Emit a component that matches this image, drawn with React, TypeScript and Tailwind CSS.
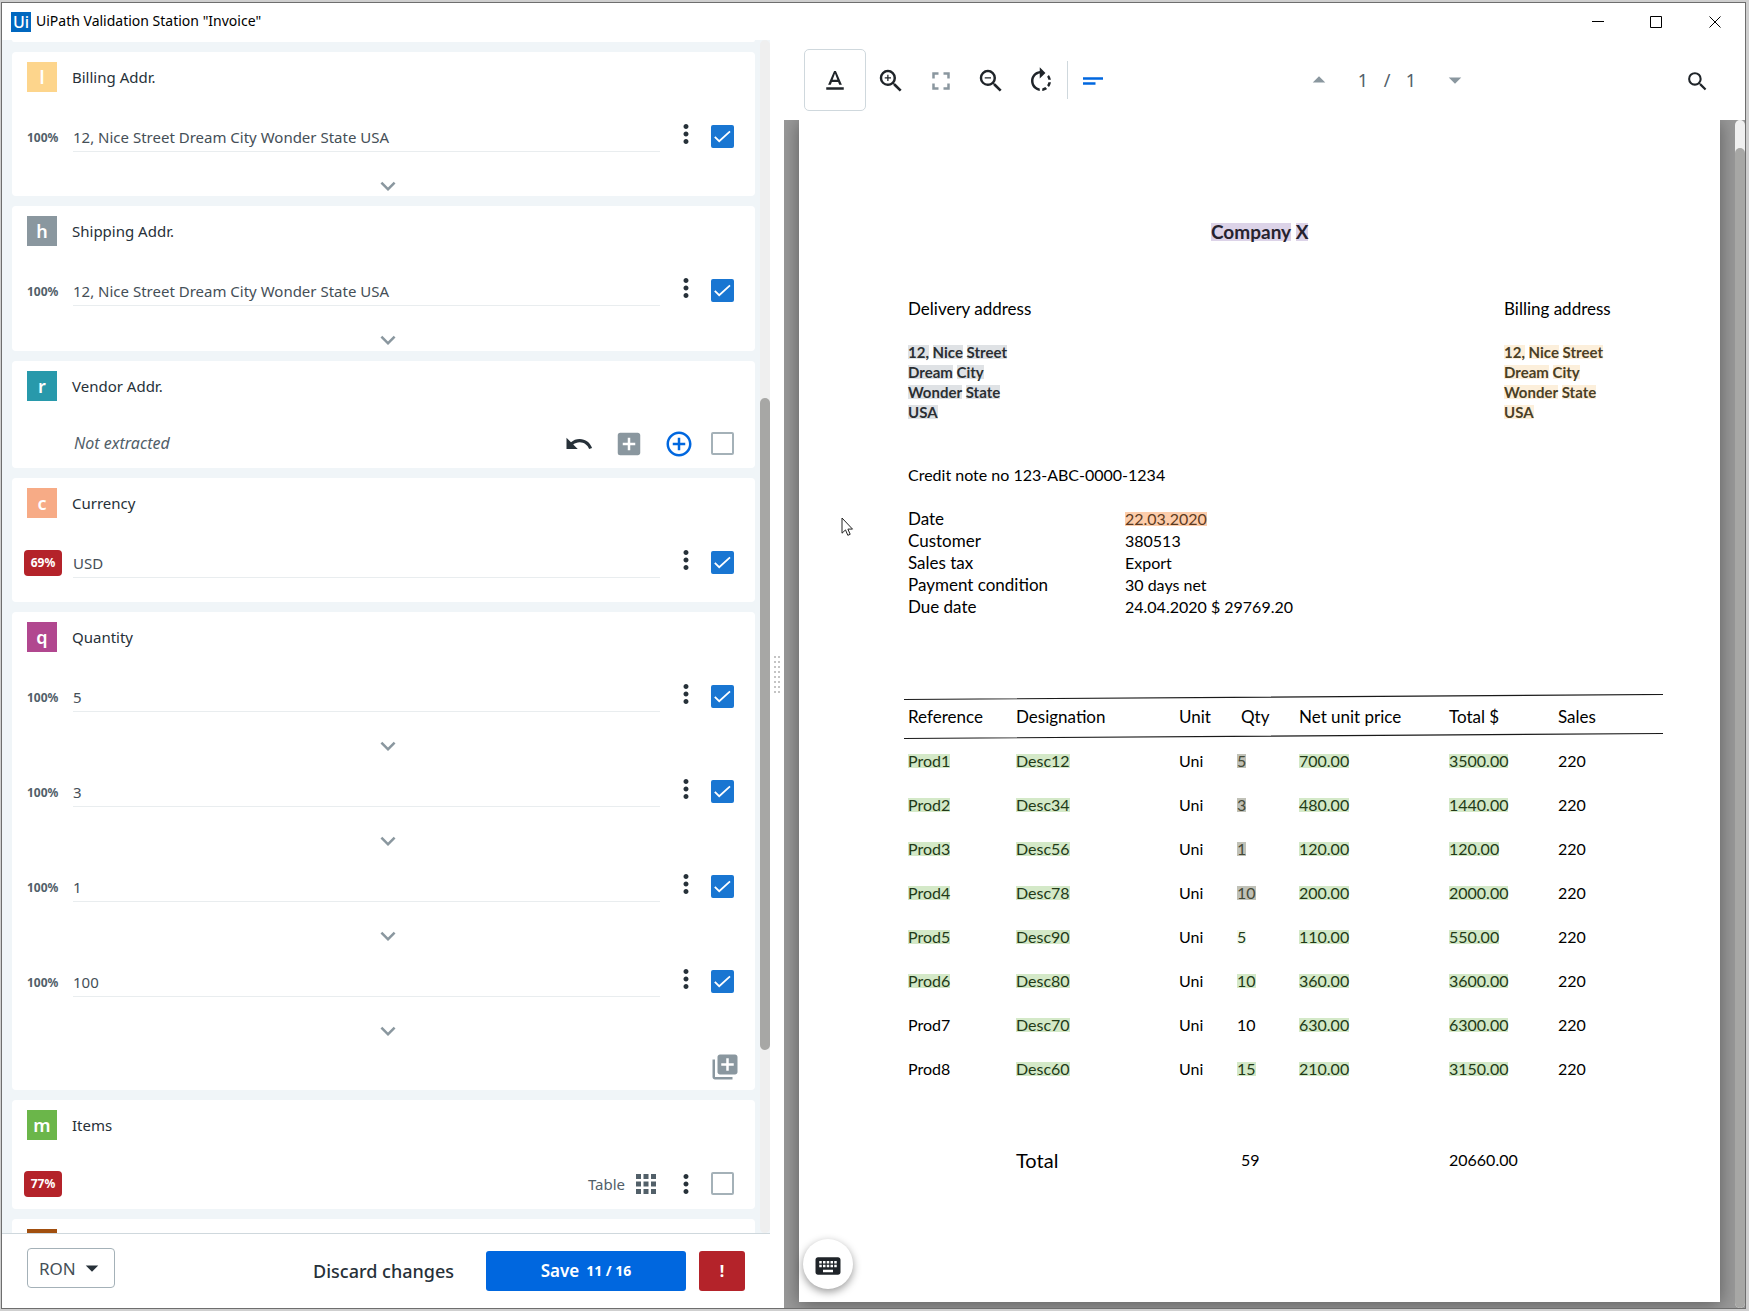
import type { ReactNode } from "react";
import {
  MdAddBox,
  MdApps,
  MdArrowDropDown,
  MdArrowDropUp,
  MdControlPoint,
  MdExpandMore,
  MdFullscreen,
  MdKeyboard,
  MdLibraryAdd,
  MdMoreVert,
  MdRotateRight,
  MdSearch,
  MdShortText,
  MdTextFormat,
  MdUndo,
  MdZoomIn,
  MdZoomOut,
} from "react-icons/md";

function TitleBar() {
  return (
    <header className="flex h-[37px] shrink-0 items-center justify-between pl-[9px] text-black">
      <div className="flex items-center gap-[5px]">
        <span className="flex size-5 items-center justify-center bg-[#0067bf] text-base font-medium leading-5 text-white">
          Ui
        </span>
        <h1 className="pb-px text-sm">UiPath Validation Station "Invoice"</h1>
      </div>
      <div className="flex">
        <button aria-label="Minimize" className="flex h-9 w-[58px] items-center justify-center">
          <svg width="12" height="12" viewBox="0 0 12 12">
            <path d="M0 5.5h12" stroke="#000" />
          </svg>
        </button>
        <button aria-label="Maximize" className="flex h-9 w-[58px] items-center justify-center">
          <svg width="12" height="12" viewBox="0 0 12 12">
            <path d="M.5.5h11v11H.5z" fill="none" stroke="#000" />
          </svg>
        </button>
        <button aria-label="Close" className="flex h-9 w-[60px] items-center justify-center">
          <svg width="12" height="12" viewBox="0 0 12 12">
            <path d="M.5.5l11 11M11.5.5l-11 11" stroke="#000" />
          </svg>
        </button>
      </div>
    </header>
  );
}

function Tick({ label, checked }: { label: string; checked?: boolean }) {
  return (
    <label className="mb-[2px] ml-[10px] grid size-[23px] shrink-0 place-items-center">
      <input
        type="checkbox"
        aria-label={label}
        defaultChecked={checked}
        className="peer col-start-1 row-start-1 size-[23px] appearance-none rounded-[2px] border-2 border-[#a4b1b8] bg-white checked:border-[#1976d2] checked:bg-[#1976d2]"
      />
      <svg
        width="17"
        height="13"
        viewBox="0 0 17 13"
        className="pointer-events-none invisible col-start-1 row-start-1 peer-checked:visible"
      >
        <path d="M.8 6.8l4.4 4.4L16 1.3" fill="none" stroke="#fff" strokeWidth="1.8" />
      </svg>
    </label>
  );
}

function Confidence({ value, low }: { value: string; low?: boolean }) {
  return low ? (
    <span className="-ml-[3px] mr-[11px] flex h-[26px] w-[38px] shrink-0 items-center justify-center rounded bg-[#b4232a] text-xs font-bold text-white">
      {value}
    </span>
  ) : (
    <span className="w-[46px] shrink-0 pt-[2px] text-xs font-bold text-[#526069]">{value}</span>
  );
}

function MoreButton() {
  return (
    <button aria-label="More options" className="shrink-0 pb-[6px] text-[#273139]">
      <MdMoreVert size={30} />
    </button>
  );
}

function FieldRow({
  name,
  value,
  confidence,
  low,
}: {
  name: string;
  value: string;
  confidence: string;
  low?: boolean;
}) {
  return (
    <div className="flex h-[30px] items-center">
      <Confidence value={confidence} low={low} />
      <input
        aria-label={name}
        defaultValue={value}
        className="mr-[11px] h-[30px] min-w-0 flex-1 border-b border-[#e9edef] bg-transparent text-[15px] text-[#454f57] outline-none"
      />
      <MoreButton />
      <Tick label={"Confirm " + name} checked />
    </div>
  );
}

function Expander() {
  return (
    <div className="mt-[19px] flex h-[30px] items-center justify-center pl-[15px] text-[#8a979f]">
      <button aria-label="Expand">
        <MdExpandMore size={30} />
      </button>
    </div>
  );
}

function Card({
  letter,
  color,
  title,
  className,
  children,
}: {
  letter: string;
  color: string;
  title: string;
  className: string;
  children: ReactNode;
}) {
  return (
    <section className={"shrink-0 rounded bg-white pl-[15px] pr-[21px] pt-[10px] " + className}>
      <div className="mb-[30px] flex items-center gap-[15px]">
        <span
          className={
            "flex size-[30px] items-center justify-center text-lg font-semibold leading-none text-white " + color
          }
        >
          {letter}
        </span>
        <h2 className="text-[15px] text-[#273139]">{title}</h2>
      </div>
      {children}
    </section>
  );
}

const address = "12, Nice Street Dream City Wonder State USA";

function FieldList() {
  return (
    <div className="flex min-h-0 flex-1 bg-[#f0f5f8]">
      <div className="flex min-w-0 flex-1 flex-col gap-[10px] overflow-hidden pl-[10px] pr-[5px]">
        <div className="h-[2px] shrink-0 rounded-b bg-white" />
        <Card letter="l" color="bg-[#fdd58c]" title="Billing Addr." className="h-[144px]">
          <FieldRow name="Billing Addr." value={address} confidence="100%" />
          <Expander />
        </Card>
        <Card letter="h" color="bg-[#8a979f]" title="Shipping Addr." className="h-[145px]">
          <FieldRow name="Shipping Addr." value={address} confidence="100%" />
          <Expander />
        </Card>
        <Card letter="r" color="bg-[#2899ab]" title="Vendor Addr." className="h-[107px]">
          <div className="-mt-[2px] flex h-[30px] items-center">
            <em className="ml-[47px] flex-1 pb-[2px] text-base text-[#526069]">Not extracted</em>
            <button aria-label="Undo" className="text-[#273139]">
              <MdUndo size={30} />
            </button>
            <button aria-label="Add value" className="ml-5 text-[#8a979f]">
              <MdAddBox size={30} />
            </button>
            <button aria-label="Add from document" className="ml-5 mr-[7px] text-[#0067df]">
              <MdControlPoint size={30} />
            </button>
            <Tick label="Confirm Vendor Addr." />
          </div>
        </Card>
        <Card letter="c" color="bg-[#f7ab86]" title="Currency" className="h-[124px]">
          <FieldRow name="Currency" value="USD" confidence="69%" low />
        </Card>
        <Card letter="q" color="bg-[#b1478f]" title="Quantity" className="h-[478px]">
          <div className="flex flex-col gap-4">
            {["5", "3", "1", "100"].map((v, i) => (
              <div key={i}>
                <FieldRow name={"Quantity " + (i + 1)} value={v} confidence="100%" />
                <Expander />
              </div>
            ))}
          </div>
          <div className="mt-[6px] flex justify-end text-[#8a979f]">
            <button aria-label="Add quantity" className="-mr-[6px]">
              <MdLibraryAdd size={30} />
            </button>
          </div>
        </Card>
        <Card letter="m" color="bg-[#6bb64a]" title="Items" className="h-[109px]">
          <div className="-mt-px flex h-[30px] items-center">
            <Confidence value="77%" low />
            <div className="flex flex-1 items-center justify-end gap-[6px] pr-[10px] text-[#526069]">
              <span className="text-[15px]">Table</span>
              <button aria-label="Open table">
                <MdApps size={30} />
              </button>
            </div>
            <button aria-label="More options" className="shrink-0 text-[#273139]">
              <MdMoreVert size={30} />
            </button>
            <Tick label="Confirm Items" />
          </div>
        </Card>
        <Card letter="" color="bg-[#a14f0f]" title="" className="h-[109px]">
          {null}
        </Card>
      </div>
      <div className="w-[10px] rounded-full bg-[#efefef] pt-[358px]">
        <div className="h-[652px] w-[10px] rounded-full bg-[#a7a7a5]" />
      </div>
    </div>
  );
}

function Footer() {
  return (
    <footer className="flex h-[75px] shrink-0 items-center border-t border-[#cfd8dd] px-[25px]">
      <div className="mb-[6px] grid h-10 w-[88px] items-center">
        <select
          aria-label="Currency format"
          className="col-start-1 row-start-1 h-10 w-[88px] appearance-none rounded border border-[#a4b1b8] bg-white pl-[11px] pt-[2px] text-[17px] text-[#454f57]"
        >
          <option>RON</option>
        </select>
        <MdArrowDropDown
          size={30}
          className="pointer-events-none col-start-1 row-start-1 mr-2 justify-self-end text-[#273139]"
        />
      </div>
      <button className="ml-auto text-lg font-medium text-[#273139]">Discard changes</button>
      <button className="ml-8 flex h-10 w-[200px] items-center justify-center gap-[7px] rounded-[3px] bg-[#0067df] text-white">
        <span className="text-[17px] font-semibold">Save</span>
        <span className="text-sm font-bold">11 / 16</span>
      </button>
      <button
        aria-label="Report problem"
        className="ml-[13px] h-10 w-[46px] rounded-[3px] bg-[#b4232a] text-base font-bold text-white"
      >
        !
      </button>
    </footer>
  );
}

function Splitter() {
  return (
    <div className="flex w-[14px] shrink-0 items-center justify-center">
      <div className="grid grid-cols-2 gap-x-[2px] gap-y-[3px]">
        {Array.from({ length: 16 }, (_, i) => (
          <span key={i} className="size-[2px] bg-[#c4c4c4]" />
        ))}
      </div>
    </div>
  );
}

function ToolButton({ label, children, className = "" }: { label: string; children: ReactNode; className?: string }) {
  return (
    <button aria-label={label} className={"flex h-[50px] w-[50px] items-center justify-center pt-[2px] " + className}>
      {children}
    </button>
  );
}

function Toolbar() {
  return (
    <div className="flex h-20 shrink-0 items-center text-[#1f2429]">
      <button
        aria-label="Text selection"
        className="ml-5 flex size-[62px] items-center justify-center rounded-[5px] border border-[#cfd8dd] pt-[2px]"
      >
        <MdTextFormat size={30} />
      </button>
      <ToolButton label="Zoom in">
        <MdZoomIn size={30} />
      </ToolButton>
      <ToolButton label="Fit to page" className="text-[#8a979f]">
        <MdFullscreen size={30} />
      </ToolButton>
      <ToolButton label="Zoom out">
        <MdZoomOut size={30} />
      </ToolButton>
      <ToolButton label="Rotate">
        <MdRotateRight size={30} />
      </ToolButton>
      <div className="ml-px h-[38px] w-px bg-[#cfd8dd]" />
      <ToolButton label="Text lines" className="text-[#0067df]">
        <MdShortText size={30} />
      </ToolButton>
      <div className="ml-auto mr-[214px] flex items-center text-lg text-[#526069]">
        <button aria-label="Previous page" className="mr-[17px] text-[#8a979f]">
          <MdArrowDropUp size={30} />
        </button>
        <span className="w-6 text-center">1</span>
        <span className="w-6 text-center">/</span>
        <span className="w-6 text-center">1</span>
        <button aria-label="Next page" className="ml-[17px] text-[#8a979f]">
          <MdArrowDropDown size={30} />
        </button>
      </div>
      <button aria-label="Search" className="mr-[35px] flex size-[26px] items-center justify-center pt-[2px]">
        <MdSearch size={25} />
      </button>
    </div>
  );
}

function Mark({ text, tone }: { text: string; tone: string }) {
  return (
    <>
      {text.split(" ").map((word, i) => (
        <span key={i}>
          {i > 0 && " "}
          <span className={"inline-block leading-[14px] " + tone}>{word}</span>
        </span>
      ))}
    </>
  );
}

const green = "bg-[#d4e9c8] text-[#223a17]";
const paleGreen = "bg-[#f3faef] text-[#223a17]";
const grey = "bg-[#c0c1b7] text-[#454a37]";
const addressLines = ["12, Nice Street", "Dream City", "Wonder State", "USA"];

function AddressBlock({ title, tone }: { title: string; tone: string }) {
  return (
    <div className="w-[159px]">
      <p className="mb-[22px] text-[17px] leading-[22px]">{title}</p>
      {addressLines.map((line) => (
        <p key={line} className="text-[15px] font-bold leading-5">
          <Mark text={line} tone={tone} />
        </p>
      ))}
    </div>
  );
}

const details = [
  ["Date", "22.03.2020"],
  ["Customer", "380513"],
  ["Sales tax", "Export"],
  ["Payment condition", "30 days net"],
  ["Due date", "24.04.2020 $ 29769.20"],
];

const products = [
  { ref: "Prod1", desc: "Desc12", qty: "5", net: "700.00", total: "3500.00", refTone: green, qtyTone: grey },
  { ref: "Prod2", desc: "Desc34", qty: "3", net: "480.00", total: "1440.00", refTone: green, qtyTone: grey },
  { ref: "Prod3", desc: "Desc56", qty: "1", net: "120.00", total: "120.00", refTone: green, qtyTone: grey },
  { ref: "Prod4", desc: "Desc78", qty: "10", net: "200.00", total: "2000.00", refTone: green, qtyTone: grey },
  { ref: "Prod5", desc: "Desc90", qty: "5", net: "110.00", total: "550.00", refTone: green, qtyTone: paleGreen },
  { ref: "Prod6", desc: "Desc80", qty: "10", net: "360.00", total: "3600.00", refTone: green, qtyTone: green },
  { ref: "Prod7", desc: "Desc70", qty: "10", net: "630.00", total: "6300.00", refTone: "", qtyTone: "" },
  { ref: "Prod8", desc: "Desc60", qty: "15", net: "210.00", total: "3150.00", refTone: "", qtyTone: green },
];

function ItemTable() {
  return (
    <div className="relative mt-[76px]">
      <svg
        className="absolute inset-x-0 top-0 h-[46px] w-full"
        viewBox="0 0 759 46"
        preserveAspectRatio="none"
        aria-hidden="true"
      >
        <path d="M0 5.5L759 .5M0 44.5L759 39.5" stroke="#1a1a1a" strokeWidth="1.2" />
      </svg>
      <table className="w-full table-fixed text-left">
        <colgroup>
          <col className="w-[108px]" />
          <col className="w-[163px]" />
          <col className="w-[58px]" />
          <col className="w-[62px]" />
          <col className="w-[150px]" />
          <col className="w-[109px]" />
          <col />
        </colgroup>
        <thead>
          <tr className="h-[46px] whitespace-nowrap text-[17px]">
            <th className="px-1 font-normal">Reference</th>
            <th className="px-1 font-normal">Designation</th>
            <th className="px-1 font-normal">Unit</th>
            <th className="pl-2 font-normal">Qty</th>
            <th className="px-1 font-normal">Net unit price</th>
            <th className="px-1 font-normal">Total $</th>
            <th className="px-1 font-normal">Sales</th>
          </tr>
        </thead>
        <tbody>
          {products.map((p) => (
            <tr key={p.ref} className="h-11">
              <td className="px-1 pb-[2px]">
                <Mark text={p.ref} tone={p.refTone} />
              </td>
              <td className="px-1 pb-[2px]">
                <Mark text={p.desc} tone={green} />
              </td>
              <td className="px-1 pb-[2px]">Uni</td>
              <td className="px-1 pb-[2px]">
                <Mark text={p.qty} tone={p.qtyTone} />
              </td>
              <td className="px-1 pb-[2px]">
                <Mark text={p.net} tone={green} />
              </td>
              <td className="px-1 pb-[2px]">
                <Mark text={p.total} tone={green} />
              </td>
              <td className="px-1 pb-[2px]">220</td>
            </tr>
          ))}
        </tbody>
        <tfoot>
          <tr className="h-[136px]">
            <td />
            <td className="px-1 text-xl">Total</td>
            <td />
            <td className="pl-2">59</td>
            <td />
            <td className="px-1">20660.00</td>
            <td />
          </tr>
        </tfoot>
      </table>
    </div>
  );
}

function Document() {
  return (
    <article className="min-w-0 flex-1 bg-white pl-[105px] pr-[57px] font-[Lato,sans-serif] text-base text-black shadow-[0_2px_18px_rgba(0,0,0,0.4)]">
      <h2 className="pl-[307px] pt-[100px] text-[19px] font-bold leading-6">
        <Mark text="Company X" tone="bg-[#dcd3e8] text-[#26222e] leading-[18px]" />
      </h2>
      <div className="mt-[54px] flex justify-between pl-1">
        <AddressBlock title="Delivery address" tone="bg-[#dfe2e5] text-[#2b2f33]" />
        <AddressBlock title="Billing address" tone="bg-[#fcefdb] text-[#4b4025]" />
      </div>
      <p className="mt-[42px] pl-1 leading-[22px]">Credit note no 123-ABC-0000-1234</p>
      <dl className="mt-[22px] grid grid-cols-[217px_1fr] pl-1 leading-[22px]">
        {details.map(([name, value], i) => (
          <div key={name} className="contents">
            <dt className="text-[17px] leading-[22px]">{name}</dt>
            <dd>{i === 0 ? <Mark text={value} tone="bg-[#fdcdab] text-[#5c3b22]" /> : value}</dd>
          </div>
        ))}
      </dl>
      <ItemTable />
    </article>
  );
}

function Viewer() {
  return (
    <div className="relative flex min-h-0 flex-1 overflow-hidden bg-[#999]">
      <div className="flex min-w-0 flex-1 px-[15px] pb-[6px]">
        <Document />
      </div>
      <div className="z-10 w-[10px] rounded-full bg-[#f0f0f0] pt-7">
        <div className="h-full w-[10px] rounded-full bg-[#a7a7a5]" />
      </div>
      <button
        aria-label="Keyboard shortcuts"
        className="absolute bottom-[19px] left-[19px] flex size-[50px] items-center justify-center rounded-full bg-white pt-[3px] text-[#1f2429] shadow-[0_3px_9px_rgba(0,0,0,0.4)]"
      >
        <MdKeyboard size={30} />
      </button>
      <svg className="absolute left-[57px] top-[397px]" width="13" height="20" viewBox="0 0 13 20" aria-hidden="true">
        <path
          d="M1 1v15.2l3.5-3.3 2.3 5.4 2.4-1-2.3-5.2h4.6z"
          fill="#fff"
          stroke="#222"
          strokeWidth="1"
        />
      </svg>
    </div>
  );
}

export default function App() {
  return (
    <div className="h-screen bg-[#cfcfcf] pb-[2px] pl-px pr-[3px] pt-[2px] font-['Noto_Sans',sans-serif]">
      <main className="flex h-full flex-col overflow-hidden border border-[#6e6e6e] bg-white">
        <TitleBar />
        <div className="flex min-h-0 flex-1">
          <div className="flex min-w-0 flex-[768] flex-col">
            <FieldList />
            <Footer />
          </div>
          <Splitter />
          <div className="flex min-w-0 flex-[961] flex-col">
            <Toolbar />
            <Viewer />
          </div>
        </div>
      </main>
    </div>
  );
}
